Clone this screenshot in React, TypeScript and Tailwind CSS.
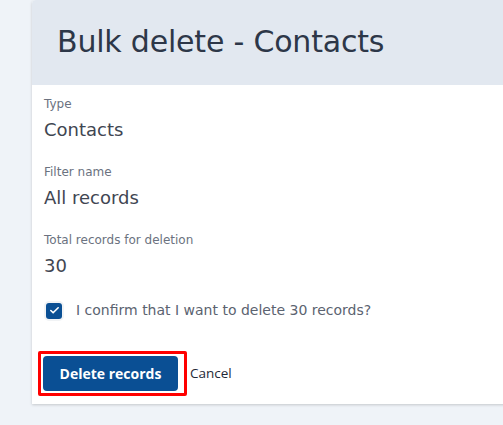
import { Check } from "lucide-react";

const font = { fontFamily: '"DejaVu Sans", "Open Sans", sans-serif' };

function Field({ label, value }: { label: string; value: string }) {
  return (
    <div className="mb-[22px]">
      <div className="text-[12px] leading-[16px] text-[#6b7280]">{label}</div>
      <div className="mt-[6px] text-[18px] leading-[24px] text-[#3f4652]">{value}</div>
    </div>
  );
}

export default function App() {
  return (
    <div className="w-[503px] h-[425px] overflow-hidden bg-[#eff3f8] pl-[32px]" style={font}>
      <div className="w-[520px] h-[404px] bg-white rounded-tl-[4px] shadow-[0_1px_3px_rgba(0,0,0,0.18)] flex flex-col">
        {/* Header */}
        <div className="h-[85px] bg-[#e2e8f0] rounded-tl-[4px] flex items-center pl-[25px]">
          <h1 className="text-[30px] text-[#2d3748] tracking-[-0.2px] pb-[2px]">Bulk delete - Contacts</h1>
        </div>

        {/* Body */}
        <div className="pl-[12px] pt-[11px]">
          <Field label="Type" value="Contacts" />
          <Field label="Filter name" value="All records" />
          <Field label="Total records for deletion" value="30" />

          <label className="flex items-center mt-[2px]">
            <span className="w-[20px] h-[20px] rounded-[5px] bg-[#f1f3f5] flex items-center justify-center">
              <span className="w-[16px] h-[16px] rounded-[3px] bg-[#0a4f94] flex items-center justify-center">
                <Check className="w-[11px] h-[11px] text-white" strokeWidth={3.5} />
              </span>
            </span>
            <span className="ml-[12px] text-[14px] text-[#5b6370]">I confirm that I want to delete 30 records?</span>
          </label>

          <div className="flex items-center mt-[30px] -ml-[6px]">
            <div className="border-[3px] border-[#ff0000] rounded-[2px] pl-[2px] pr-[6px] py-[2px]">
              <button
                type="button"
                className="w-[135px] h-[35px] rounded-[4px] bg-[#0a4f94] text-white text-[14px] font-bold"
                style={{ fontFamily: '"Open Sans", sans-serif' }}
              >
                Delete records
              </button>
            </div>
            <button
              type="button"
              className="ml-[3px] text-[13.5px] text-[#1f2937]"
              style={{ fontFamily: '"Open Sans", sans-serif' }}
            >
              Cancel
            </button>
          </div>
        </div>
      </div>
    </div>
  );
}
